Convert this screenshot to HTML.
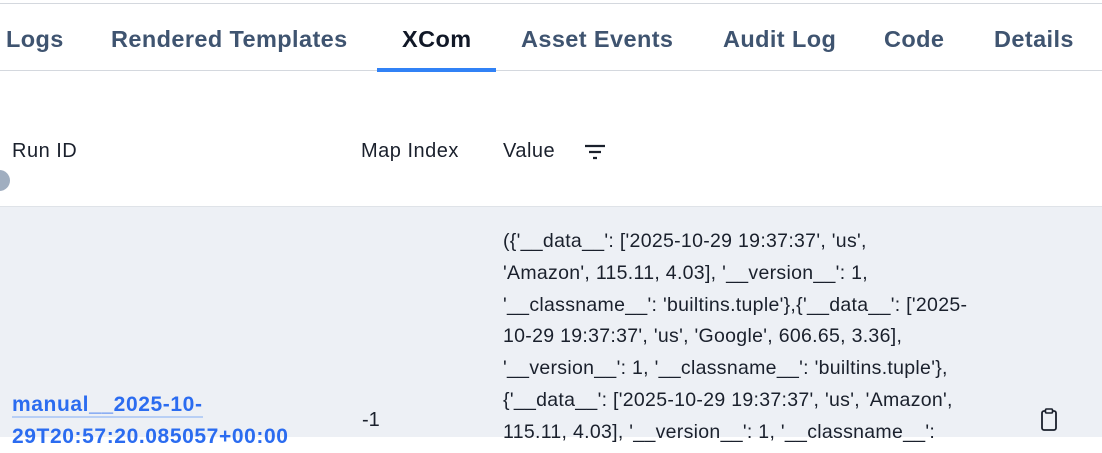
<!DOCTYPE html>
<html><head><style>
body{margin:0;width:1102px;height:437px;overflow:hidden;background:#fff;font-family:"Liberation Sans",sans-serif;position:relative}
.top{position:absolute;left:0;right:0;top:3px;border-top:1px solid #d4d8de}
.tabs{position:absolute;left:0;right:0;top:0;height:70px;border-bottom:1px solid #d4d8de}
.tab{position:absolute;top:26px;font-size:23.5px;letter-spacing:0.4px;font-weight:bold;color:#3f5470;white-space:nowrap}
.ul{position:absolute;left:377px;width:119px;top:68px;height:4px;background:#3182f6}
.h{position:absolute;top:140px;font-size:20px;letter-spacing:0.5px;color:#1a202c}
.row{position:absolute;left:0;right:0;top:206px;bottom:0;background:#edf0f5;border-top:1px solid #dfe3e8}
.val{position:absolute;left:503px;top:226px;font-size:19.5px;line-height:31.8px;color:#1a202c;white-space:nowrap;letter-spacing:0.3px}
.link{position:absolute;left:12px;top:389px;font-size:21px;letter-spacing:0.6px;font-weight:bold;color:#2b6cf0;line-height:32px;white-space:nowrap}
.dot{position:absolute;left:-11px;top:170px;width:21px;height:21px;border-radius:50%;background:#a0aec0}
</style></head><body>
<div class="top"></div>
<div class="tabs">
<span class="tab" style="left:6px">Logs</span>
<span class="tab" style="left:111px">Rendered Templates</span>
<span class="tab" style="left:402px;color:#111827">XCom</span>
<span class="tab" style="left:521px">Asset Events</span>
<span class="tab" style="left:723px">Audit Log</span>
<span class="tab" style="left:884px">Code</span>
<span class="tab" style="left:994px">Details</span>
</div>
<div class="ul"></div>
<span class="h" style="left:12px">Run ID</span>
<span class="h" style="left:361px">Map Index</span>
<span class="h" style="left:503px">Value</span>
<svg style="position:absolute;left:584px;top:142px" width="22" height="20" viewBox="0 0 22 20"><path d="M1 4h20M5 10h12M9 16h4" stroke="#1a202c" stroke-width="2.2"/></svg>
<div class="row"></div>
<div class="dot"></div>
<div class="val">({'__data__': ['2025-10-29 19:37:37', 'us',<br>'Amazon', 115.11, 4.03], '__version__': 1,<br>'__classname__': 'builtins.tuple'},{'__data__': ['2025-<br>10-29 19:37:37', 'us', 'Google', 606.65, 3.36],<br>'__version__': 1, '__classname__': 'builtins.tuple'},<br>{'__data__': ['2025-10-29 19:37:37', 'us', 'Amazon',<br>115.11, 4.03], '__version__': 1, '__classname__':</div>
<div class="link"><span style="border-bottom:2px solid #b8cff5">manual__2025-10-</span><br>29T20:57:20.085057+00:00</div>
<span style="position:absolute;left:362px;top:409px;font-size:20px;color:#1a202c">-1</span>
<svg style="position:absolute;left:1039px;top:408px" width="20" height="24" viewBox="0 0 20 24"><rect x="3" y="3" width="14" height="19" rx="2" fill="none" stroke="#1a202c" stroke-width="1.8"/><rect x="6.5" y="1" width="7" height="4" rx="1" fill="#edf0f5" stroke="#1a202c" stroke-width="1.6"/></svg>
</body></html>
